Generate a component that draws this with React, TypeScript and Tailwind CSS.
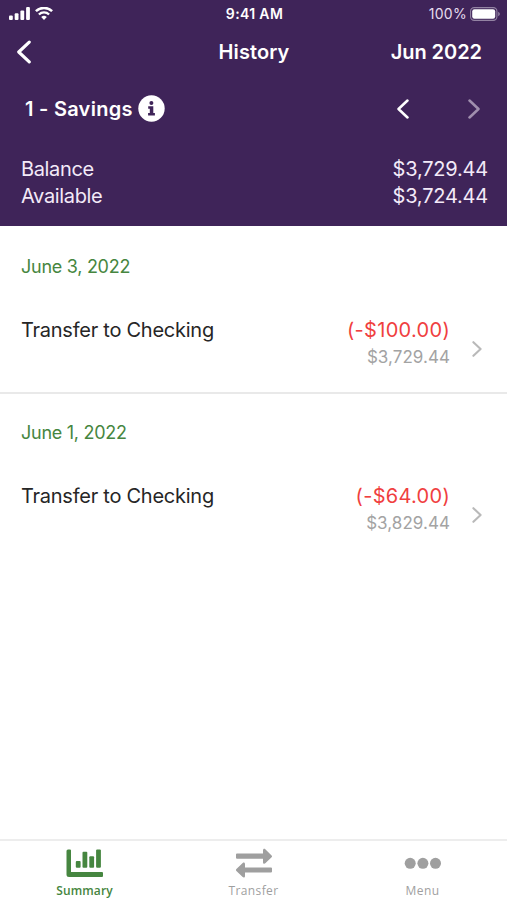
import type { ReactNode } from 'react';

interface Transaction {
  id: number;
  date: string;
  title: string;
  amount: string;
  balance: string;
}

const TRANSACTIONS: Transaction[] = [
  {
    id: 1,
    date: 'June 3, 2022',
    title: 'Transfer to Checking',
    amount: '(-$100.00)',
    balance: '$3,729.44',
  },
  {
    id: 2,
    date: 'June 1, 2022',
    title: 'Transfer to Checking',
    amount: '(-$64.00)',
    balance: '$3,829.44',
  },
];

function Chevron({
  direction,
  className,
  strokeWidth = 2.5,
}: {
  direction: 'left' | 'right';
  className: string;
  strokeWidth?: number;
}) {
  return (
    <svg
      className={className}
      viewBox="0 0 12 20"
      fill="none"
      stroke="currentColor"
      strokeWidth={strokeWidth}
      strokeLinecap="round"
      strokeLinejoin="round"
    >
      <path d={direction === 'left' ? 'M10.5 1.5L1.5 10l9 8.5' : 'M1.5 1.5l9 8.5-9 8.5'} />
    </svg>
  );
}

function StatusBar() {
  return (
    <div className="grid h-7 grid-cols-3 items-center pl-[9px] pr-[7px]">
      <div className="flex items-center gap-[5px] pb-px">
        <svg className="h-[13px] w-[21px]" viewBox="0 0 21 13" fill="currentColor">
          <rect x="0" y="8.5" width="3.8" height="4.5" rx="1" />
          <rect x="5.7" y="6.2" width="3.8" height="6.8" rx="1" />
          <rect x="11.4" y="3.4" width="3.8" height="9.6" rx="1" />
          <rect x="17.1" y="0" width="3.8" height="13" rx="1" />
        </svg>
        <svg className="h-[13px] w-[18px]" viewBox="0 0 18 13" fill="none" stroke="currentColor">
          <path d="M.9 4.2a11.6 11.6 0 0 1 16.2 0" strokeWidth="2.5" />
          <path d="M3.9 7.5a7.2 7.2 0 0 1 10.2 0" strokeWidth="2.3" />
          <path d="M6.2 10.1a4 4 0 0 1 5.6 0L9 12.9z" fill="currentColor" stroke="none" />
        </svg>
      </div>
      <span className="pb-0.5 text-center text-[14px] font-semibold tracking-[0.35px]">9:41 AM</span>
      <div className="flex items-center justify-end gap-[3px] pb-px">
        <span className="text-[14px] tracking-[0.3px] text-[#e6dcee]">100%</span>
        <svg className="h-[14px] w-[30px]" viewBox="0 0 30 14">
          <rect
            x=".6"
            y=".6"
            width="26.3"
            height="12.8"
            rx="3.6"
            fill="none"
            stroke="#9383a3"
            strokeWidth="1.1"
          />
          <rect x="2.2" y="2.2" width="23" height="9.6" rx="2.2" fill="#fff" />
          <path d="M28.2 4.8c1 .5 1.6 1.3 1.6 2.2s-.6 1.7-1.6 2.2z" fill="#9383a3" />
        </svg>
      </div>
    </div>
  );
}

function Header() {
  return (
    <header className="h-[226px] bg-[#3f2459] text-white">
      <StatusBar />

      <div className="grid h-[49px] grid-cols-3 items-center pb-0.5 pl-[17px] pr-[25px] text-[20px] font-semibold">
        <button type="button" aria-label="Back">
          <Chevron direction="left" className="h-6 w-[14px]" strokeWidth={2.7} />
        </button>
        <h1 className="pl-[9px] text-center tracking-[0.1px]">History</h1>
        <span className="whitespace-nowrap text-right tracking-[-0.05px]">Jun 2022</span>
      </div>

      {/* Account switcher */}
      <div className="flex h-[63px] items-center pl-[25px] pr-[27px]">
        <h2 className="text-[20px] font-semibold tracking-[0.27px]">1 - Savings</h2>
        <svg className="ml-[5px] size-[27px]" viewBox="0 0 27 27">
          <circle cx="13.5" cy="13.5" r="13.2" fill="#fff" />
          <g fill="#3f2459">
            <circle cx="13.4" cy="8.1" r="2" />
            <path d="M10.2 11.3h5.1v6.6h1.6v2.5h-6.8v-2.5h1.7v-4.1h-1.6z" />
          </g>
        </svg>
        <div className="ml-auto flex items-center gap-[59px]">
          <button type="button" aria-label="Previous account">
            <Chevron direction="left" className="h-5 w-3" />
          </button>
          <button type="button" aria-label="Next account" disabled>
            <Chevron direction="right" className="h-5 w-3 text-[#a08fae]" />
          </button>
        </div>
      </div>

      {/* Balances */}
      <dl className="pl-[21px] pr-[19px] pt-4 text-[20px] leading-[27px] text-[#f3eaf8]">
        <div className="flex justify-between">
          <dt className="tracking-[-0.35px]">Balance</dt>
          <dd className="tracking-[-0.2px]">$3,729.44</dd>
        </div>
        <div className="flex justify-between">
          <dt className="tracking-[-0.35px]">Available</dt>
          <dd className="tracking-[-0.2px]">$3,724.44</dd>
        </div>
      </dl>
    </header>
  );
}

function TransactionRow({ transaction }: { transaction: Transaction }) {
  return (
    <li className="h-[166px] border-b-2 border-[#e9e9e9] pl-[21px] pr-[25px] pt-[25px] last:border-b-0">
      <p className="text-[18px] leading-7 tracking-[-0.27px] text-[#468640]">{transaction.date}</p>
      <div className="mt-[35px] flex">
        <p className="text-[20px] leading-7 tracking-[-0.25px] text-[#262626]">{transaction.title}</p>
        <div className="ml-auto text-right">
          <p className="text-[20px] leading-7 tracking-[0.3px] text-[#f03f3f]">{transaction.amount}</p>
          <p className="text-[17px] leading-[26px] tracking-[0.05px] text-[#a3a3a3]">{transaction.balance}</p>
        </div>
        <Chevron direction="right" className="ml-[22px] mt-[25px] h-4 w-[10px] text-[#b9b9b9]" strokeWidth={2.6} />
      </div>
    </li>
  );
}

function Tab({ label, active, children }: { label: string; active?: boolean; children: ReactNode }) {
  return (
    <button
      type="button"
      className={`flex flex-1 flex-col items-center pt-[7px] ${active ? 'text-[#468640]' : 'text-[#9f9f9f]'}`}
    >
      {children}
      <span
        className={`mt-[5px] font-['Open_Sans',sans-serif] text-[12px] leading-4 ${
          active ? 'font-semibold tracking-[0.1px]' : 'font-medium tracking-[0.4px]'
        }`}
      >
        {label}
      </span>
    </button>
  );
}

function TabBar() {
  return (
    <nav className="flex h-[61px] border-t-2 border-[#ededed]">
      <Tab label="Summary" active>
        <svg className="h-[30px] w-[38px]" viewBox="0 0 38 30" fill="currentColor">
          <path d="M2 1.5h2a1 1 0 0 1 1 1V24h31a1 1 0 0 1 1 1v3a1 1 0 0 1-1 1H3a2.500 2.500 0 0 1-2.500-2.500V3A1.500 1.500 0 0 1 2 1.500z" />
          <rect x="9.8" y="13" width="4.8" height="6.8" rx="1" />
          <rect x="16.5" y="3.8" width="4.8" height="16" rx="1" />
          <rect x="23.3" y="8.3" width="4.8" height="11.5" rx="1" />
          <rect x="30.1" y="1.5" width="4.8" height="18.3" rx="1" />
        </svg>
      </Tab>
      <Tab label="Transfer">
        <svg className="h-[30px] w-[38px]" viewBox="0 0 38 30" fill="currentColor">
          <path d="M2 5.600h26V2.400c0-1.500 1.300-2.100 2.300-1.100l6.300 6.100c.6.600.6 1.200 0 1.800l-6.300 6.100c-1 1-2.300.4-2.300-1.100v-3.500H2a1 1 0 0 1-1-1V6.600a1 1 0 0 1 1-1z" />
          <path d="M36 19.500H10v-3.400c0-1.500-1.300-2.100-2.300-1.100l-6.300 6.100c-.6.600-.6 1.200 0 1.800l6.300 6.100c1 1 2.300.4 2.300-1.100v-3.500h26a1 1 0 0 0 1-1v-2.900a1 1 0 0 0-1-1z" />
        </svg>
      </Tab>
      <Tab label="Menu">
        <svg className="h-[30px] w-[38px]" viewBox="0 0 38 30" fill="currentColor">
          <circle cx="6.2" cy="15.3" r="5.5" />
          <circle cx="18.9" cy="15.3" r="5.5" />
          <circle cx="31.5" cy="15.3" r="5.5" />
        </svg>
      </Tab>
    </nav>
  );
}

export default function App() {
  return (
    <div className="flex h-screen flex-col overflow-hidden bg-white font-['Inter',sans-serif]">
      <Header />
      <ul className="flex-1 pt-[2px]">
        {TRANSACTIONS.map((transaction) => (
          <TransactionRow key={transaction.id} transaction={transaction} />
        ))}
      </ul>
      <TabBar />
    </div>
  );
}
